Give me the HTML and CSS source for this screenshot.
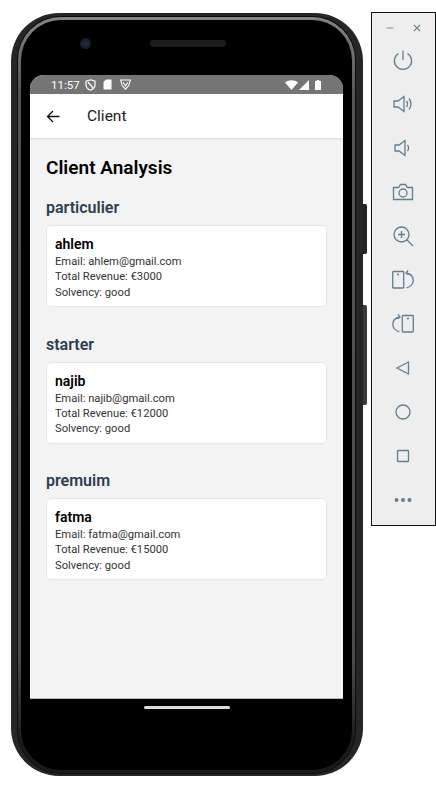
FILE: index.html
```html
<!DOCTYPE html>
<html lang="en">
<head>
  <meta charset="UTF-8" />
  <title>Client</title>
  <link rel="stylesheet" href="styles.css">
</head>
<body>
  <div class="phone">
    <span class="side-key key-power"></span>
    <span class="side-key key-volume"></span>
    <div class="phone-ring">
      <div class="phone-face">
        <div class="bezel-top">
          <span class="camera"></span>
          <span class="speaker"></span>
        </div>
        <div class="screen">
          <div class="status-bar">
            <span class="clock">11:57</span>
            <svg class="st-icon" width="11" height="12" viewBox="0 0 11 12"><path d="M5.5 0.8 L10 2.2 V6 C10 8.4 7.8 10.3 5.5 11.2 C3.2 10.3 1 8.4 1 6 V2.2 Z M3 3 L8 9" fill="none" stroke="#fff" stroke-width="1.2"/></svg>
            <svg class="st-icon gap-sd" width="9" height="11" viewBox="0 0 9 11"><path d="M3 0.5 H8.5 V10.5 H0.5 V3 Z" fill="#fff"/></svg>
            <svg class="st-icon gap-vpn" width="11" height="11" viewBox="0 0 11 11"><path d="M0.6 1 H10.4 L8.8 6.5 L5.5 10.2 L2.2 6.5 Z M3.2 3.2 L5.5 7 L7.8 3.2" fill="none" stroke="#fff" stroke-width="1.1"/></svg>
            <span class="status-right">
              <svg width="13" height="10" viewBox="0 0 13 10"><path d="M0 2.6 C3.6 -0.6 9.4 -0.6 13 2.6 L6.5 10 Z" fill="#fff"/></svg>
              <svg width="10" height="10" viewBox="0 0 10 10"><path d="M10 0 V10 H0 Z" fill="#fff"/></svg>
              <svg class="st-battery" width="6" height="10" viewBox="0 0 6 10"><path d="M1.8 0 H4.2 V1 H6 V10 H0 V1 H1.8 Z" fill="#fff"/></svg>
            </span>
          </div>
          <div class="app-bar">
            <svg class="back" width="14" height="13" viewBox="0 0 14 13"><path d="M13.5 6.5 H1.5 M7 1 L1.5 6.5 L7 12" fill="none" stroke="#111" stroke-width="1.3"/></svg>
            <span class="app-title">Client</span>
          </div>
          <div class="content">
            <h1 class="page-title">Client Analysis</h1>

            <section class="group">
              <h2 class="group-title">particulier</h2>
              <div class="client-card">
                <div class="client-name">ahlem</div>
                <div class="client-line">Email: ahlem@gmail.com</div>
                <div class="client-line">Total Revenue: €3000</div>
                <div class="client-line">Solvency: good</div>
              </div>
            </section>

            <section class="group">
              <h2 class="group-title">starter</h2>
              <div class="client-card">
                <div class="client-name">najib</div>
                <div class="client-line">Email: najib@gmail.com</div>
                <div class="client-line">Total Revenue: €12000</div>
                <div class="client-line">Solvency: good</div>
              </div>
            </section>

            <section class="group">
              <h2 class="group-title">premuim</h2>
              <div class="client-card">
                <div class="client-name">fatma</div>
                <div class="client-line">Email: fatma@gmail.com</div>
                <div class="client-line">Total Revenue: €15000</div>
                <div class="client-line">Solvency: good</div>
              </div>
            </section>
          </div>
        </div>
        <div class="bezel-bottom">
          <span class="home-pill"></span>
        </div>
      </div>
    </div>
  </div>

  <aside class="emu-panel">
    <div class="emu-head">
      <svg width="8" height="8" viewBox="0 0 8 8"><path d="M0.5 4 H7.5" stroke="#8fa3ad" stroke-width="1.2"/></svg>
      <svg width="8" height="8" viewBox="0 0 8 8"><path d="M0.8 0.8 L7.2 7.2 M7.2 0.8 L0.8 7.2" stroke="#5f8291" stroke-width="1.2"/></svg>
    </div>
    <div class="emu-tools">
      <svg width="22" height="22" viewBox="0 0 22 22"><path d="M6.5 4.5 A8.6 8.6 0 1 0 15.5 4.5 M11 1.5 V11" /></svg>
      <svg width="22" height="22" viewBox="0 0 22 22"><path d="M2 8 H6 L12 3.5 V18.5 L6 14 H2 Z M14.5 8 C15.8 9.8 15.8 12.2 14.5 14 M17 5.5 C19.6 8.6 19.6 13.4 17 16.5" /></svg>
      <svg width="22" height="22" viewBox="0 0 22 22"><path d="M3 8 H7 L13 3.5 V18.5 L7 14 H3 Z M15.5 8 C16.8 9.8 16.8 12.2 15.5 14" /></svg>
      <svg width="22" height="22" viewBox="0 0 22 22"><path d="M1.5 6.5 H6.5 L8.5 3.5 H13.5 L15.5 6.5 H20.5 V18.5 H1.5 Z" /><circle cx="11" cy="12" r="4" /></svg>
      <svg width="22" height="22" viewBox="0 0 22 22"><circle cx="9.5" cy="9.5" r="7.5" /><path d="M9.5 6 V13 M6 9.5 H13 M15 15 L21 21" /></svg>
      <svg width="22" height="22" viewBox="0 0 22 22"><rect x="0.7" y="2.5" width="11" height="16.5" rx="0.8" /><path d="M5 5.5 H7 M16 1.5 L14 4 L16.5 5.8 M14.2 4 C23.5 6 23.5 16 14.5 19" /></svg>
      <svg width="22" height="22" viewBox="0 0 22 22"><rect x="10.3" y="2.5" width="11" height="16.5" rx="0.8" /><path d="M15 5.5 H17 M6 1.5 L8 4 L5.5 5.8 M7.8 4 C-1.5 6 -1.5 16 7.5 19" /></svg>
      <svg width="22" height="22" viewBox="0 0 22 22"><path d="M5 11 L16.5 5 V17 Z" /></svg>
      <svg width="22" height="22" viewBox="0 0 22 22"><circle cx="11" cy="11" r="7" /></svg>
      <svg width="22" height="22" viewBox="0 0 22 22"><rect x="5.5" y="5.5" width="11" height="11" rx="0.8" /></svg>
      <svg width="22" height="22" viewBox="0 0 22 22"><circle class="dot" cx="4.5" cy="11" r="2" /><circle class="dot" cx="11" cy="11" r="2" /><circle class="dot" cx="17.5" cy="11" r="2" /></svg>
    </div>
  </aside>
</body>
</html>
```

FILE: styles.css
```css
* { box-sizing: border-box; }
html, body { margin: 0; padding: 0; }
body { width: 436px; height: 790px; overflow: hidden; background: #fff; font-family: Roboto, "Liberation Sans", sans-serif; display: flex; align-items: flex-start; }

/* phone body */
.phone { position: relative; width: 352px; height: 763px; margin: 13px 0 0 11px; padding: 4px 8px 3px 7px; background: #262626; border-radius: 48px; }
.phone-ring { height: 100%; padding: 3px; background: linear-gradient(#858587, #555557 10%, #4c4c4e 85%, #1a1a1a 96%); border-radius: 43px; box-shadow: 0 0 0 1px #0c0c0c; }
.phone-face { display: flex; flex-direction: column; height: 100%; padding: 0 9px; background: #000; border-radius: 40px; }
.side-key { position: absolute; left: 352px; width: 4px; border-radius: 0 2px 2px 0; }
.key-power { top: 191px; height: 50px; background: #222; }
.key-volume { top: 292px; height: 100px; background: #3a3a3a; }

.bezel-top { display: flex; align-items: center; height: 55px; flex: none; padding: 0 0 9px 50px; }
.camera { width: 11px; height: 11px; border-radius: 50%; background: radial-gradient(circle, #1d2a44 20%, #191a1d 65%); }
.speaker { width: 76px; height: 7px; margin-left: 59px; border-radius: 4px; background: #1d1d1d; }

.screen { display: flex; flex-direction: column; height: 624px; flex: none; border-radius: 14px 14px 0 0; overflow: hidden; background: #f3f3f3; border-bottom: 1px solid #bbb; }

.status-bar { display: flex; align-items: center; flex: none; height: 19px; padding: 0 22px 0 21px; background: #757575; color: #fff; font-size: 11.5px; }
.clock { margin-right: 5px; }
.st-icon { display: block; }
.gap-sd { margin-left: 7px; }
.gap-vpn { margin-left: 8px; }
.status-right { display: flex; align-items: center; gap: 1px; margin-left: auto; }
.st-battery { margin-left: 5px; }

.app-bar { display: flex; align-items: center; flex: none; height: 44px; padding-left: 16px; background: #fff; box-shadow: 0 1px 2px rgba(0, 0, 0, 0.12); position: relative; }
.back { display: block; }
.app-title { margin-left: 27px; font-size: 15.5px; color: #222; }

.content { flex: 1; padding: 18px 16px 0 16px; }
.page-title { margin: 0 0 18px 0; font-size: 19px; line-height: 24px; font-weight: 600; color: #000; }
.group { margin-bottom: 27.5px; }
.group-title { margin: 0 0 8px 0; font-size: 16px; line-height: 19px; font-weight: 600; color: #2c3e50; }
.client-card { height: 82px; padding: 10px 8px 0 8px; background: #fff; border: 1px solid #e6e6e6; border-radius: 5px; }
.client-name { font-size: 14px; line-height: 17px; font-weight: 600; color: #000; margin-bottom: 1px; }
.client-line { font-size: 11.2px; line-height: 15.3px; color: #333; }

.bezel-bottom { display: flex; justify-content: center; flex: 1; padding-top: 7px; }
.home-pill { width: 86px; height: 3px; background: #ddd; border-radius: 2px; }

/* emulator toolbar */
.emu-panel { width: 65px; height: 514px; margin: 12px 0 0 8px; background: #eee; border: 1px solid #111; flex: none; }
.emu-head { display: flex; justify-content: space-between; align-items: center; height: 26px; padding: 3px 14px 0 14px; }
.emu-head svg { display: block; }
.emu-tools { display: flex; flex-direction: column; align-items: center; gap: 22px; padding: 10px 2px 0 0; }
.emu-tools svg { display: block; overflow: visible; }
.emu-tools path, .emu-tools circle, .emu-tools rect { fill: none; stroke: #5f7f8e; stroke-width: 1.3; }
.emu-tools .dot { fill: #5f7f8e; stroke: none; }
```
